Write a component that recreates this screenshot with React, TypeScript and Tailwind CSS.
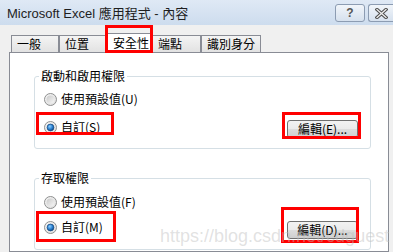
import React from 'react';

const cjk = "font-['Noto_Sans_CJK_TC','Noto_Sans_CJK_SC',sans-serif]";

function Radio({ checked, id }: { checked?: boolean; id: string }) {
  return (
    <svg width="13" height="13" viewBox="0 0 13 13" className="shrink-0">
      <defs>
        <linearGradient id={`${id}-o`} x1="0" y1="0" x2="1" y2="1">
          <stop offset="0" stopColor="#f6f6f6" />
          <stop offset="1" stopColor="#dcdcdc" />
        </linearGradient>
        <linearGradient id={`${id}-i`} x1="0" y1="0" x2="1" y2="1">
          <stop offset="0" stopColor="#c9c9c9" />
          <stop offset="1" stopColor="#f7f7f7" />
        </linearGradient>
        <radialGradient id={`${id}-c`} cx="0.4" cy="0.35" r="0.7">
          <stop offset="0" stopColor="#8fd0ff" />
          <stop offset="0.55" stopColor="#2b82d3" />
          <stop offset="1" stopColor="#0b3f78" />
        </radialGradient>
      </defs>
      <circle cx="6.5" cy="6.5" r="6" fill={`url(#${id}-o)`} stroke="#8e8f8f" strokeWidth="1" />
      {checked ? (
        <circle cx="6.5" cy="6.5" r="3.4" fill={`url(#${id}-c)`} stroke="#1b4f86" strokeWidth="0.8" />
      ) : (
        <circle cx="6.5" cy="6.5" r="4" fill={`url(#${id}-i)`} />
      )}
    </svg>
  );
}

function Win7Button({ label }: { label: string }) {
  return (
    <div className="w-[71px] h-[18px] rounded-[3px] border border-[#707070] bg-[linear-gradient(to_bottom,#f2f2f2_0%,#ebebeb_50%,#dddddd_50%,#cfcfcf_100%)] flex items-center justify-center text-[12px] leading-[14px] text-black">
      {label}
    </div>
  );
}

const tabs = [
  { label: '一般', w: 'w-[48px]' },
  { label: '位置', w: 'w-[47px]' },
  { label: '安全性', w: 'w-[46px]', active: true },
  { label: '端點', w: 'w-[49px]' },
  { label: '識別身分', w: 'w-[60px]' },
];

export default function App() {
  return (
    <div className={`w-[393px] h-[252px] overflow-hidden bg-[#f0f0f0] relative flex flex-col ${cjk} text-[12px] text-black`}>
      {/* title bar */}
      <div className="h-[25px] shrink-0 bg-[linear-gradient(to_bottom,#dfe9f5,#cddcee)] flex items-start justify-between">
        <div className="pl-[7px] pt-[6px] text-[13px] leading-[16px] text-[#1e1e1e] font-['Liberation_Sans','Noto_Sans_CJK_TC',sans-serif] whitespace-nowrap">
          Microsoft Excel 應用程式 - 內容
        </div>
        <div className="flex gap-[3px] pt-[4px]">
          <div className="w-[30px] h-[18px] rounded-[3px] border border-[#8c9cb2] bg-[linear-gradient(to_bottom,#f1f5fa,#d6e1ee)] flex items-center justify-center text-[12px] leading-[12px] font-bold text-[#555] font-['Liberation_Sans',sans-serif]">
            ?
          </div>
          <div className="w-[25px] h-[18px] rounded-l-[3px] border border-r-0 border-[#8c9cb2] bg-[linear-gradient(to_bottom,#f1f5fa,#d6e1ee)] flex items-center justify-center">
            <svg width="13" height="11" viewBox="0 0 13 11">
              <path d="M2 1.5 L11 9.5 M11 1.5 L2 9.5" stroke="#4d4d4d" strokeWidth="3.4" strokeLinecap="square" />
              <path d="M2 1.5 L11 9.5 M11 1.5 L2 9.5" stroke="#eeeeee" strokeWidth="1.3" strokeLinecap="square" />
            </svg>
          </div>
        </div>
      </div>

      {/* tabs */}
      <div className="mt-[8px] h-[19px] shrink-0 flex items-end pl-[11px]">
        {tabs.map((t) =>
          t.active ? (
            <div
              key={t.label}
              className={`${t.w} h-[20px] -mb-px relative z-10 bg-white border border-b-0 border-[#898c95] pl-[6px] leading-[16px] pt-[1px]`}
            >
              {t.label}
              <div className="absolute -left-[2px] -right-[2px] -top-[9px] bottom-0 border-[3px] border-[#ff0000]" />
            </div>
          ) : (
            <div
              key={t.label}
              className={`${t.w} h-[17px] border border-b-0 border-[#898c95] bg-[linear-gradient(to_bottom,#f4f4f4,#e2e2e2)] pl-[5px] leading-[16px]`}
            >
              {t.label}
            </div>
          ),
        )}
      </div>

      {/* panel */}
      <div className="ml-[9px] w-[380px] flex-1 bg-white border border-[#898c95] pl-[24px] pr-[17px] pt-[16px] relative">
        <fieldset className="border border-[#d5dfe5] rounded-[3px] pb-[10px]">
          <legend className="ml-[4px] px-[2px] leading-[14px]">啟動和啟用權限</legend>
          <div className="mt-[8px] ml-[9px] h-[16px] flex items-center gap-[4px] leading-[16px]">
            <Radio id="r1" />
            <span>使用預設值(U)</span>
          </div>
          <div className="mt-[12px] flex items-start justify-between">
            <div className="ml-[9px] h-[16px] flex items-center gap-[4px] leading-[16px] relative">
              <Radio id="r2" checked />
              <span>自訂(S)</span>
              <div className="absolute -left-[8px] -top-[7px] w-[78px] h-[23px] border-[3px] border-[#ff0000]" />
            </div>
            <div className="mt-[1px] mr-[12px] relative">
              <Win7Button label="編輯(E)..." />
              <div className="absolute -left-[5px] -top-[8px] w-[79px] h-[27px] border-[3px] border-[#ff0000]" />
            </div>
          </div>
        </fieldset>

        <fieldset className="mt-[22px] border border-[#d5dfe5] rounded-[3px] pb-[10px]">
          <legend className="ml-[4px] px-[2px] leading-[14px]">存取權限</legend>
          <div className="mt-[9px] ml-[9px] h-[16px] flex items-center gap-[4px] leading-[16px]">
            <Radio id="r3" />
            <span>使用預設值(F)</span>
          </div>
          <div className="mt-[9px] flex items-start justify-between">
            <div className="ml-[9px] h-[16px] flex items-center gap-[4px] leading-[16px] relative">
              <Radio id="r4" checked />
              <span>自訂(M)</span>
              <div className="absolute -left-[8px] -top-[8px] w-[80px] h-[31px] border-[3px] border-[#ff0000]" />
            </div>
            <div className="mt-[2px] mr-[12px] relative">
              <Win7Button label="編輯(D)..." />
              <div className="absolute -left-[6px] -top-[14px] w-[78px] h-[36px] border-[3px] border-[#ff0000]" />
            </div>
          </div>
        </fieldset>

        {/* watermark */}
        <div className="absolute left-[150px] top-[173px] text-[18px] leading-[20px] text-[rgba(190,190,190,0.45)] font-['Liberation_Sans',sans-serif] whitespace-nowrap pointer-events-none">
          https://blog.csdn.net/cdguest
        </div>
      </div>
    </div>
  );
}
